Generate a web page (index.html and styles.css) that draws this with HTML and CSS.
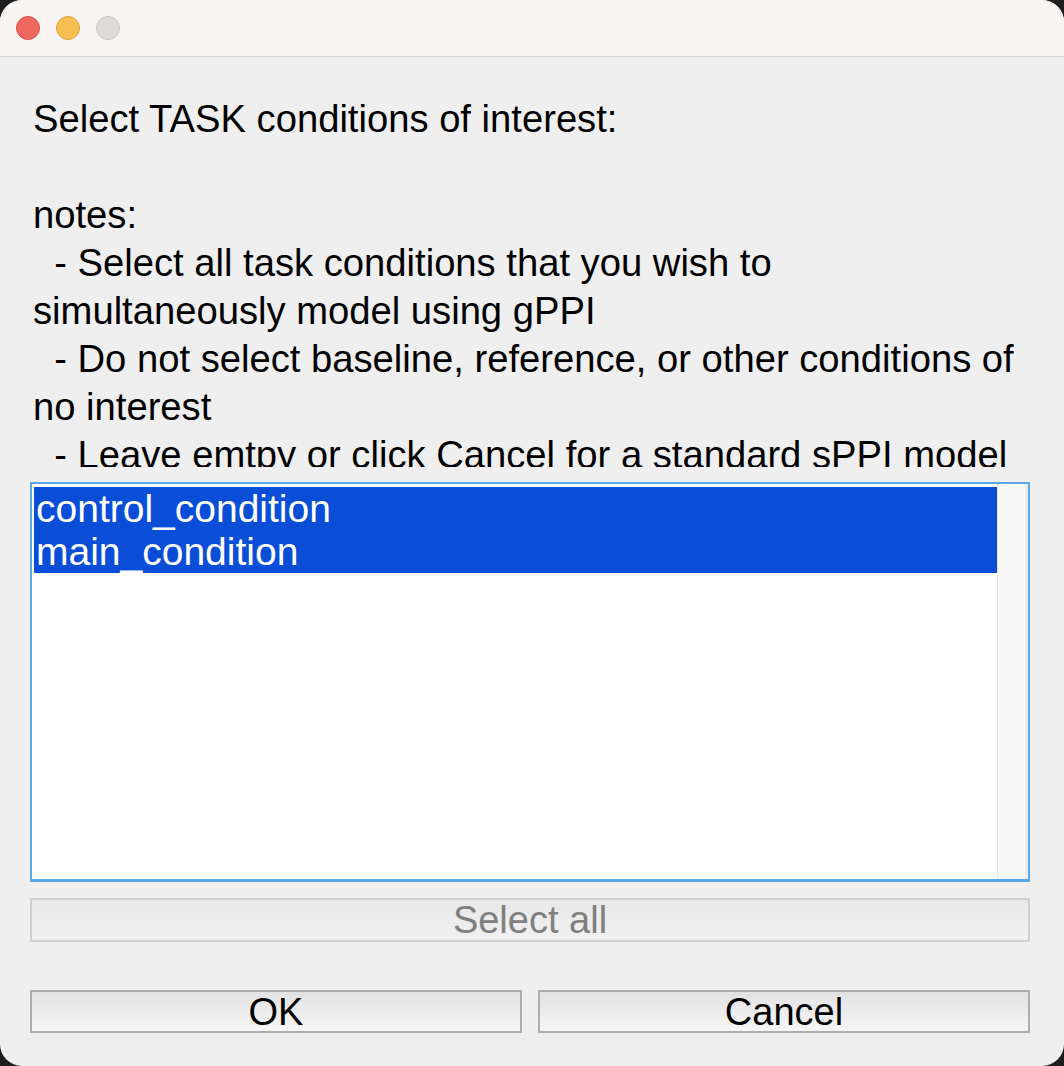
FILE: index.html
```html
<!DOCTYPE html>
<html>
<head>
<meta charset="utf-8">
<link rel="stylesheet" href="styles.css">
</head>
<body>
<div class="window">
  <div class="titlebar">
    <span class="light red"></span>
    <span class="light yellow"></span>
    <span class="light gray"></span>
  </div>
  <div class="content">
    <div class="prompt"><div class="line">Select TASK conditions of interest:</div><div class="line">&nbsp;</div><div class="line">notes:</div><div class="line">  - Select all task conditions that you wish to</div><div class="line">simultaneously model using gPPI</div><div class="line">  - Do not select baseline, reference, or other conditions of</div><div class="line">no interest</div><div class="line">  - Leave emtpy or click Cancel for a standard sPPI model</div></div>
    <div class="listbox">
      <div class="items">
        <div class="item selected">control_condition</div>
        <div class="item selected">main_condition</div>
      </div>
      <div class="scrollbar"></div>
    </div>
    <div class="btn disabled">Select all</div>
    <div class="actions">
      <div class="btn">OK</div>
      <div class="btn">Cancel</div>
    </div>
  </div>
</div>
</body>
</html>
```
FILE: styles.css
```css
html, body {
  margin: 0;
  padding: 0;
  background: #1e1e1e;
}
body {
  width: 1064px;
  height: 1066px;
  overflow: hidden;
  font-family: "Liberation Sans", Arial, sans-serif;
}
.window {
  width: 1064px;
  height: 1066px;
  border-radius: 22px;
  overflow: hidden;
  background: #efefef;
  display: flex;
  flex-direction: column;
}
.titlebar {
  height: 56px;
  flex: none;
  background: #f8f4f1;
  border-bottom: 1px solid #d4d1ce;
  display: flex;
  align-items: center;
  gap: 16px;
  padding-left: 16px;
  box-sizing: content-box;
}
.light {
  width: 22px;
  height: 22px;
  border-radius: 50%;
  border: 1px solid;
}
.red { background: #ee6a5f; border-color: #d5524a; }
.yellow { background: #f5be4f; border-color: #d8a140; }
.gray { background: #dedad7; border-color: #c7c3c0; }
.content {
  flex: 1;
  padding: 38px 34px 0 30px;
  display: flex;
  flex-direction: column;
}
.prompt {
  height: 372px;
  overflow: hidden;
  padding-left: 3px;
  font-size: 38.2px;
  line-height: 48px;
  color: #000;
  white-space: pre;
}
.listbox {
  margin-top: 15px;
  height: 393px;
  border: 2px solid #5aa7e7;
  border-bottom-width: 3px;
  background: #fff;
  display: flex;
  padding: 2px 0 0 2px;
}
.items {
  flex: 1;
  padding-top: 1px;
}
.item {
  height: 43px;
  line-height: 43px;
  font-size: 39px;
  padding-left: 2px;
  color: #000;
}
.item.selected {
  background: #0a4ed8;
  color: #fff;
}
.scrollbar {
  width: 27px;
  margin-top: -2px;
  background: #f9f9f9;
  border-left: 1px solid #e4e4e4;
  border-right: 3px solid #ebebeb;
}
.btn {
  height: 40px;
  border: 2px solid #adadad;
  background: linear-gradient(#e2e2e2, #f6f6f6);
  font-size: 38px;
  line-height: 40px;
  text-align: center;
  color: #000;
}
.btn.disabled {
  margin-top: 16px;
  border-color: #d0d0d0;
  background: linear-gradient(#e8e8e8, #f1f1f1);
  color: #808080;
}
.actions {
  margin-top: 48px;
  display: flex;
  gap: 16px;
}
.actions .btn {
  flex: 1;
  height: 39px;
}
```
